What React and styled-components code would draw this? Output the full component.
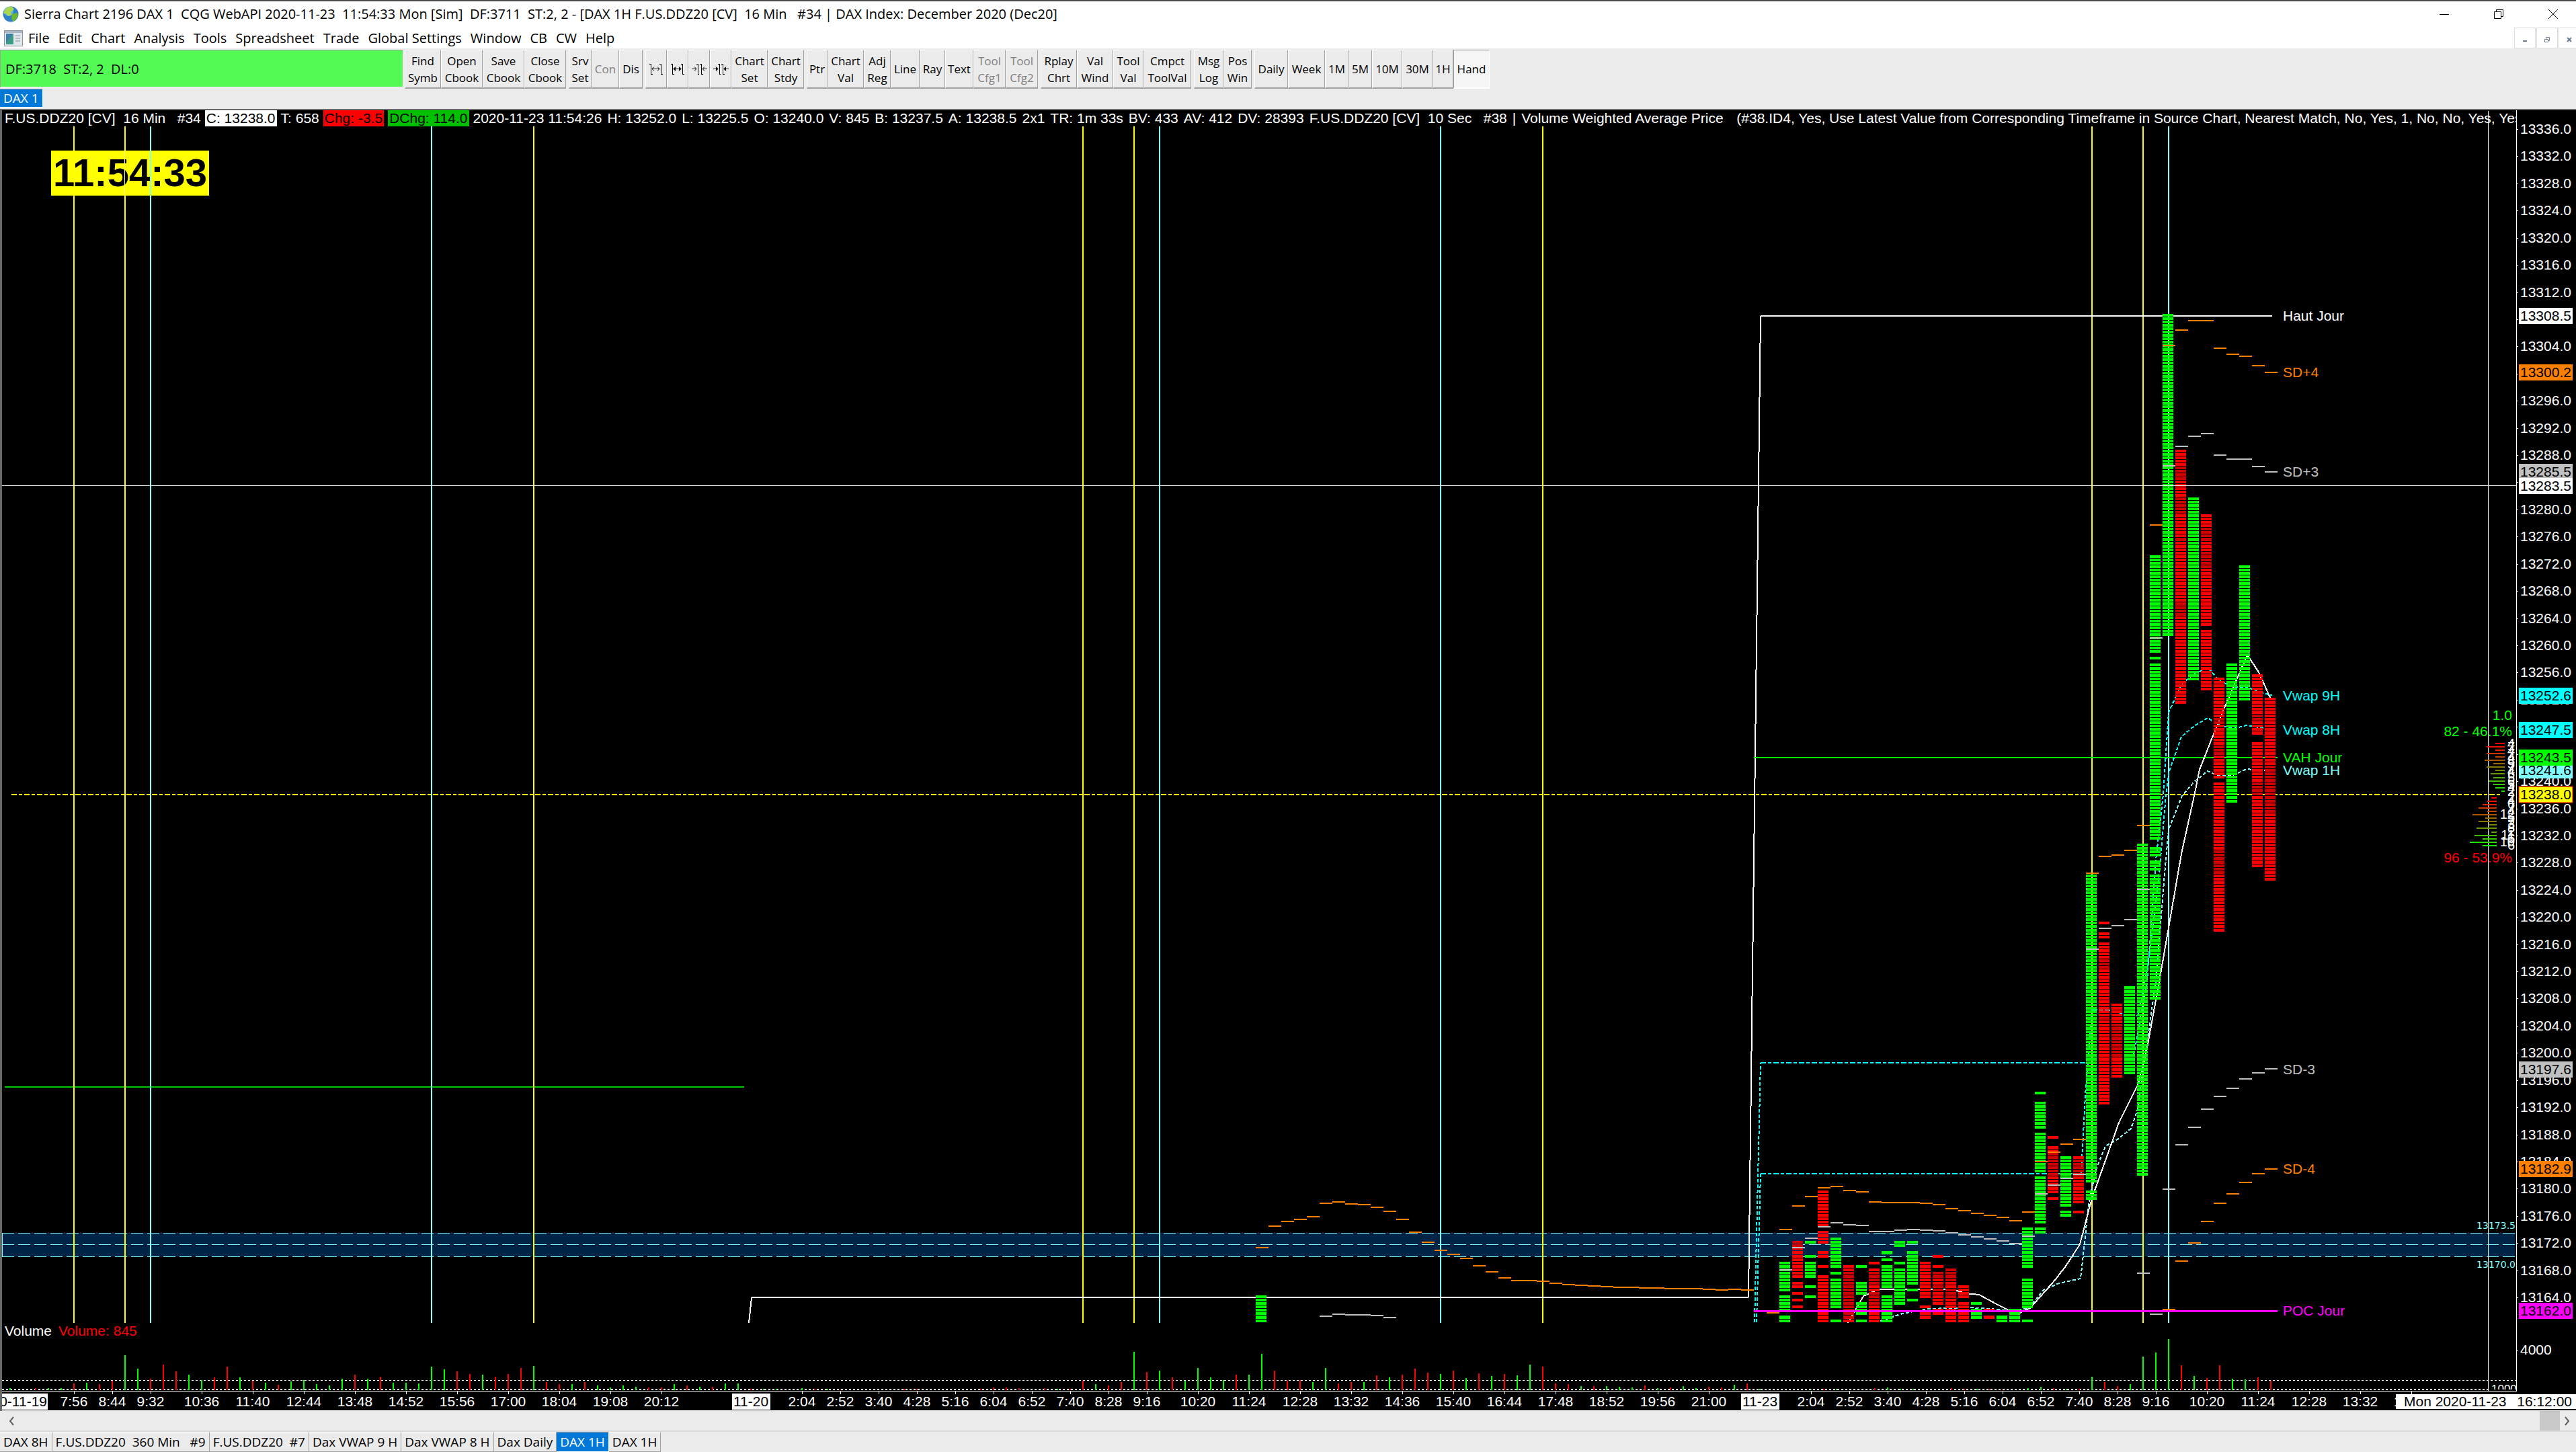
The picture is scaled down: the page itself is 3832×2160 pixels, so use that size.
import React from 'react'
import styled, { createGlobalStyle } from 'styled-components'

const GlobalStyle = createGlobalStyle`
	body {
		margin: 0;
		background: #ebebeb;
	}
	* {
		box-sizing: border-box;
	}
`

const uiFont = '"Open Sans", "Noto Sans", sans-serif'
const chartFont = '"Liberation Sans", Arial, sans-serif'

const Page = styled.div`
	display: flex;
	flex-direction: column;
	width: 100%;
	overflow: hidden;
	background: #ebebeb;
	border-top: 2px solid #4a4a4a;
	font-family: ${uiFont};
	font-size: 20px;
	color: #000;
`

const TitleBar = styled.header`
	display: flex;
	align-items: center;
	height: 39px;
	padding: 0 0 2px 4px;
	gap: 8px;
	background: #fff;
`

const TitleText = styled.h1`
	flex: 1;
	margin: 0;
	font-size: 20px;
	font-weight: 400;
	line-height: 26px;
	white-space: pre;
`

const WindowButtons = styled.div`
	display: flex;
	margin-right: -6px;
`

const WindowButton = styled.button`
	display: flex;
	align-items: center;
	justify-content: center;
	width: 81px;
	height: 34px;
	padding: 0;
	border: 0;
	background: none;
`

const MenuBar = styled.nav`
	display: flex;
	align-items: center;
	height: 31px;
	padding-left: 6px;
	background: #fff;
`

const MenuItems = styled.div`
	display: flex;
	flex: 1;
	gap: 13px;
	padding-left: 8px;
`

const MenuItem = styled.button`
	padding: 0;
	border: 0;
	background: none;
	font: inherit;
	line-height: 26px;
`

const MdiButton = styled.button`
	display: flex;
	align-items: center;
	justify-content: center;
	width: 32px;
	height: 31px;
	margin-left: 1px;
	padding: 4px 0 0;
	border: 1px solid #dcdcdc;
	background: #fff;
`

const ToolBar = styled.div`
	display: flex;
	height: 60px;
	padding-top: 2px;
	gap: 4px;
`

const Status = styled.div`
	display: flex;
	align-items: center;
	width: 600px;
	height: 56px;
	padding-left: 7px;
	margin-right: -2px;
	border: 1px solid #a0a0a0;
	border-right-color: #fff;
	border-bottom-color: #fff;
	background: #54fa54;
	white-space: pre;
`

const ToolGroup = styled.div`
	display: flex;
`

const ToolButton = styled.button`
	display: flex;
	align-items: center;
	justify-content: center;
	width: ${props => props.$width}px;
	height: 58px;
	padding: 0;
	border: solid;
	border-width: 1px 1px 2px;
	border-color: ${props => props.$pressed ? '#a0a0a0 #fff #fff #a0a0a0' : '#fff #a0a0a0 #a0a0a0 #fff'};
	background: ${props => props.$pressed ? '#f5f5f5' : '#ebebeb'};
	color: ${props => props.disabled ? '#808080' : '#000'};
	font: inherit;
	font-size: 17px;
	line-height: 25px;
	text-align: center;
	white-space: pre;
`

const TabRow = styled.div`
	display: flex;
	height: 30px;
`

const Tab = styled.button`
	height: ${props => props.$compact ? '28px' : '30px'};
	padding: 0 5px;
	border: solid;
	border-width: 1px 1px 1px 0;
	border-color: ${props => props.$active ? '#a0a0a0 #fff #fff' : '#fff #a0a0a0 #a0a0a0'};
	background: ${props => props.$active ? '#0078d7' : '#ebebeb'};
	color: ${props => props.$active ? '#fff' : '#000'};
	font: inherit;
	font-size: 19px;
	line-height: 26px;
	white-space: pre;
`

const ChartWindow = styled.main`
	position: relative;
	border-top: 2px solid #696969;
	border-left: 3px solid #696969;
	background: #000;
	svg {
		display: block;
		width: 100%;
		height: auto;
	}
`

const ChartHeader = styled.div`
	position: absolute;
	top: 0;
	left: 0;
	right: 89px;
	display: flex;
	gap: 6px;
	padding-left: 4px;
	overflow: hidden;
	color: #fff;
	font-family: ${chartFont};
	font-size: 21px;
	line-height: 24px;
	white-space: pre;
`

const HeaderTag = styled.span`
	padding: 0 2px;
	background: ${props => props.$bg};
	color: #000;
`

const HeaderValues = styled.div`
	display: flex;
	gap: 8px;
`

const Clock = styled.div`
	position: absolute;
	top: 60px;
	left: 73px;
	padding: 0 3px 2px;
	background: #ff0;
	color: #000;
	font: bold 58px/65px ${chartFont};
	/* session lines stay visible across the clock */
	&::before,
	&::after {
		content: '';
		position: absolute;
		top: 0;
		bottom: 0;
		left: 109px;
		width: 1px;
		background: #ffff80;
	}
	&::after {
		left: 147px;
		width: 2px;
		background: #80ffff;
	}
`

const ScrollBar = styled.div`
	display: flex;
	align-items: center;
	justify-content: space-between;
	height: 31px;
	border-bottom: 2px solid #d9d9d9;
`

const ScrollEnd = styled.div`
	display: flex;
`

const ScrollThumb = styled.div`
	width: 30px;
	height: 29px;
	background: #c8c8c8;
`

const ScrollButton = styled.button`
	width: 24px;
	height: 29px;
	margin-left: ${props => props.$left ? '6px' : '0'};
	padding: 0 7px;
	border: 0;
	background: none;
	svg {
		display: block;
	}
`

const menus = ['File', 'Edit', 'Chart', 'Analysis', 'Tools', 'Spreadsheet', 'Trade', 'Global Settings', 'Window', 'CB', 'CW', 'Help']

// label, width, state
const toolGroups = [
	[['Find\nSymb', 54], ['Open\nCbook', 62], ['Save\nCbook', 62], ['Close\nCbook', 62]],
	[['Srv\nSet', 34], ['Con', 41, 'off'], ['Dis', 35]],
	[['out', 32], ['outBold', 32], ['in', 32], ['inBold', 32], ['Chart\nSet', 54], ['Chart\nStdy', 54]],
	[['Ptr', 31], ['Chart\nVal', 54], ['Adj\nReg', 40], ['Line', 43], ['Ray', 38], ['Text', 42], ['Tool\nCfg1', 48, 'off'], ['Tool\nCfg2', 48, 'off']],
	[['Rplay\nChrt', 54], ['Val\nWind', 54], ['Tool\nVal', 45], ['Cmpct\nToolVal', 71]],
	[['Msg\nLog', 44], ['Pos\nWin', 42]],
	[['Daily', 50], ['Week', 55], ['1M', 35], ['5M', 35], ['10M', 45], ['30M', 45], ['1H', 31], ['Hand', 54, 'pressed']],
]

const chartTabs = ['DAX 8H', 'F.US.DDZ20  360 Min   #9', 'F.US.DDZ20  #7', 'Dax VWAP 9 H', 'Dax VWAP 8 H', 'Dax Daily', 'DAX 1H', 'DAX 1H']

const headerValues = [
	'2020-11-23 11:54:26', 'H: 13252.0', 'L: 13225.5', 'O: 13240.0', 'V: 845', 'B: 13237.5', 'A: 13238.5', '2x1',
	'TR: 1m 33s', 'BV: 433', 'AV: 412', 'DV: 28393', 'F.US.DDZ20 [CV]  10 Sec   #38', '|', 'Volume Weighted Average Price',
	'  (#38.ID4, Yes, Use Latest Value from Corresponding Timeframe in Source Chart, Nearest Match, No, Yes, 1, No, No, Yes, Yes',
]

const GREEN = '#00ff00'
const RED = '#ff0000'
const ORANGE = '#ff8000'
const GREY = '#c0c0c0'
const CYAN = '#00ffff'
const PALE = '#80ffff'
const YELLOW = '#ffff00'

const barX = i => 15 + i * 19
const priceY = p => 192 + (13336 - p) * 10.105

const sessionLines = [
	[5, YELLOW], [9, YELLOW], [11, PALE], [33, PALE], [41, YELLOW],
	[84, YELLOW], [88, YELLOW], [90, PALE], [112, PALE], [120, YELLOW],
	[163, YELLOW], [167, YELLOW], [169, PALE],
]

// bar index, colour, then top/bottom pairs of the traded ranges
const columns = [
	[98, GREEN, 1927, 1968],
	[139, GREEN, 1876, 1921, 1927, 1952, 1957, 1968],
	[140, RED, 1846, 1901, 1907, 1917, 1922, 1927, 1932, 1937, 1942, 1947],
	[141, GREEN, 1846, 1851, 1866, 1871, 1876, 1902, 1912, 1917, 1927, 1932],
	[142, RED, 1770, 1826, 1831, 1851, 1861, 1871, 1881, 1886, 1896, 1968],
	[143, GREEN, 1841, 1886, 1891, 1896, 1901, 1947, 1962, 1968],
	[144, RED, 1881, 1968],
	[145, GREEN, 1881, 1886, 1906, 1927, 1937, 1957, 1962, 1968],
	[146, RED, 1876, 1881, 1886, 1968],
	[147, GREEN, 1861, 1866, 1871, 1876, 1881, 1917, 1927, 1968],
	[148, GREEN, 1846, 1856, 1876, 1881, 1886, 1942],
	[149, GREEN, 1846, 1851, 1861, 1911, 1917, 1922, 1932, 1937],
	[150, RED, 1876, 1932, 1942, 1947, 1952, 1962],
	[151, RED, 1866, 1871, 1881, 1886, 1891, 1942, 1947, 1957],
	[152, RED, 1886, 1968],
	[153, RED, 1912, 1932, 1937, 1968],
	[154, GREEN, 1937, 1942, 1947, 1962, 1967, 1968],
	[155, RED, 1947, 1952, 1957, 1962, 1967, 1968],
	[156, GREEN, 1957, 1968],
	[157, GREEN, 1947, 1968],
	[158, GREEN, 1826, 1886, 1901, 1947, 1962, 1967],
	[159, GREEN, 1624, 1629, 1639, 1679, 1684, 1745, 1750, 1820, 1826, 1835],
	[160, RED, 1689, 1694, 1704, 1775, 1780, 1785],
	[161, GREEN, 1720, 1795, 1800, 1810],
	[162, RED, 1720, 1790, 1800, 1805],
	[163, GREEN, 1299, 1760, 1770, 1785],
	[164, RED, 1371, 1376, 1386, 1396, 1401, 1643],
	[165, RED, 1492, 1603],
	[166, GREEN, 1467, 1598],
	[167, GREEN, 1255, 1749],
	[168, GREEN, 826, 971, 977, 982, 987, 1249, 1260, 1275, 1280, 1295, 1300, 1486],
	[169, GREEN, 467, 946],
	[170, RED, 669, 1047],
	[171, GREEN, 740, 1011],
	[172, RED, 765, 932, 937, 1028],
	[173, RED, 1007, 1158, 1164, 1385],
	[174, GREEN, 987, 1193],
	[175, GREEN, 841, 1043],
	[176, RED, 1002, 1092, 1103, 1289],
	[177, RED, 1038, 1309],
]

const darkRows = [
	[140, 1846, 1857], [144, 1891, 1962], [146, 1892, 1912], [146, 1922, 1942], [151, 1891, 1902],
	[151, 1912, 1922], [152, 1886, 1907], [152, 1917, 1932], [160, 1715, 1750], [162, 1725, 1745],
	[164, 1426, 1442], [164, 1512, 1517], [165, 1521, 1572], [170, 694, 715], [170, 740, 765],
	[170, 800, 806], [170, 896, 916], [172, 785, 806], [172, 820, 842], [173, 1068, 1078],
	[173, 1108, 1120], [173, 1265, 1300], [176, 1063, 1072], [176, 1164, 1182], [177, 1138, 1210],
]

const steps = (start, ys) => ys.map((y, n) => [start + n, y])

const orangeSteps = [
	...steps(98, [1856, 1824, 1817, 1814, 1810, 1790, 1788, 1791, 1792, 1796, 1802, 1814, 1833, 1848, 1860, 1866, 1872, 1883, 1892, 1901, 1905, 1905, 1906, 1909, 1911, 1912, 1913, 1914, 1915, 1915, 1916, 1916, 1917, 1917, 1917, 1918, 1919, 1918, 1919]),
	...steps(138, [1953, 1829, 1794, 1780, 1767, 1765, 1771, 1773, 1788, 1789, 1789, 1789, 1790, 1792, 1798, 1801, 1805, 1808, 1811, 1816, 1803, 1728, 1714, 1702, 1695, 1299, 1274, 1272, 1265, 1228, 781, 514, 491, 477, 477, 518, 527, 530, 544, 554]),
	...steps(169, [1948, 1876, 1849, 1817, 1790, 1776, 1759, 1746, 1739]),
]

const greySteps = [
	...steps(103, [1958, 1955, 1956, 1956, 1957, 1960]),
	...steps(139, [1889, 1856, 1842, 1825, 1819, 1822, 1823, 1832, 1832, 1830, 1829, 1830, 1831, 1834, 1837, 1840, 1843, 1846, 1850, 1839, 1776, 1763, 1753, 1747, 1412, 1381, 1377, 1368, 1323, 949, 693, 664, 649, 645, 677, 683, 683, 694, 702]),
	...steps(167, [1894, 1955, 1769, 1703, 1677, 1650, 1631, 1619, 1605, 1596, 1590]),
]

// positive = up bar, negative = down bar, height in px
const volumes = [
	3, 0, -3, 3, 3, -10, 11, -9, -14, 52, 32, -17, -38, -28, 23, 15, -19, -35, 19, -14,
	11, -8, 13, 15, 9, 7, 17, -23, 17, -20, 11, 11, 10, 35, 31, -28, -24, 23, -20, -24,
	-33, 36, -12, -9, 9, -12, 7, 4, 7, 5, -4, -4, 9, -7, 5, -5, 10, 10, -2, 2,
	2, 0, 3, -2, 2, -1, 0, 0, 0, 0, -2, -2, 0, 0, 0, 0, -2, -4, -4, -3,
	0, -3, 2, -2, -14, 9, -7, -12, 57, -27, 29, -19, 14, 33, 19, 15, -23, 23, 54, -29,
	-14, -15, 12, 33, -10, -12, 12, -22, 19, -23, -32, -26, 24, -29, 18, -25, 21, -24, 22, 38,
	-35, -10, -9, 6, -6, 6, 5, 4, -7, 3, -4, 6, 3, -5, -4, 8, -10, 2, 0, 0,
	0, 1, -2, 2, 0, 0, -3, 4, 2, 2, 0, 0, -3, -2, 2, -2, -1, 0, 3, 5,
	-3, 2, -2, 20, -12, -6, 9, 50, 56, 76, -37, 21, -18, -37, 17, 16, -19, -14,
]

const times = [
	['7:56', 5], ['8:44', 8], ['9:32', 11], ['10:36', 15], ['11:40', 19], ['12:44', 23], ['13:48', 27], ['14:52', 31],
	['15:56', 35], ['17:00', 39], ['18:04', 43], ['19:08', 47], ['20:12', 51], ['2:04', 62], ['2:52', 65], ['3:40', 68],
	['4:28', 71], ['5:16', 74], ['6:04', 77], ['6:52', 80], ['7:40', 83], ['8:28', 86], ['9:16', 89], ['10:20', 93],
	['11:24', 97], ['12:28', 101], ['13:32', 105], ['14:36', 109], ['15:40', 113], ['16:44', 117], ['17:48', 121],
	['18:52', 125], ['19:56', 129], ['21:00', 133], ['2:04', 141], ['2:52', 144], ['3:40', 147], ['4:28', 150],
	['5:16', 153], ['6:04', 156], ['6:52', 159], ['7:40', 162], ['8:28', 165], ['9:16', 168], ['10:20', 172],
	['11:24', 176], ['12:28', 180], ['13:32', 184], ['14:36', 188],
]

const priceTags = [
	[13308.5, '#fff'], [13300.2, ORANGE], [13285.5, GREY], [13283.5, '#fff'], [13252.6, CYAN], [13247.5, CYAN],
	[13241.6, PALE], [13243.5, GREEN], [13238, YELLOW, RED], [13197.6, GREY], [13182.9, ORANGE], [13162, '#ff00ff'],
]

const studyLabels = [
	['Haut Jour', 13308.5, '#fff'], ['SD+4', 13300.2, ORANGE], ['SD+3', 13285.5, GREY], ['Vwap 9H', 13252.6, CYAN],
	['Vwap 8H', 13247.5, CYAN], ['VAH Jour', 13243.5, GREEN], ['Vwap 1H', 13241.6, PALE], ['SD-3', 13197.6, GREY],
	['SD-4', 13182.9, ORANGE], ['POC Jour', 13162, '#ff00ff'],
]

// resting orders: bar lengths around the last price
const asks = [14, 27, 14, 27, 14, 30, 17, 27, 14, 21, 17, 24, 17, 14, 5]
const bids = [8, 14, 21, 27, 14, 36, 17, 27, 11, 30, 8, 33, 21, 40, 21]

const heat = n => {
	const g = Math.round(n * 17)
	return `rgb(${255 - g}, ${g}, 0)`
}

const Globe = () => (
	<svg width="24" height="28" viewBox="0 0 24 28" aria-hidden="true">
		<circle cx="12" cy="14" r="11.5" fill="#2f80c8" />
		<circle cx="9" cy="10" r="7" fill="#8fd0f5" opacity="0.6" />
		<path d="M3 8 Q8 2 14 3 L17 7 L12 11 L13 15 L8 17 L5 13 L1 13 Z" fill="#a8d84a" />
		<path d="M14 14 L21 12 L23 15 Q21 22 16 25 L13 21 Z" fill="#6cb52d" />
	</svg>
)

const ChartIcon = () => (
	<svg width="28" height="24" viewBox="0 0 28 24" aria-hidden="true">
		<rect x="0.5" y="0.5" width="27" height="23" fill="#dfe6ec" stroke="#8b949c" />
		<rect x="1" y="1" width="26" height="3" fill="#a9b7c4" />
		<rect x="3" y="5" width="11" height="16" fill="#3d9a86" />
		<path d="M3 5 H14 L3 18 Z" fill="#3f7fae" />
		<path d="M17 8 H24 M17 12 H24 M17 16 H24" stroke="#8b949c" />
	</svg>
)

const SpacingIcon = ({ type }) => {
	const outward = type.startsWith('out')
	const bold = type.endsWith('Bold')
	const frame = outward ? 'M2 2 H5 M4 2 V18 M4 17 H7 M17 2 H20 M19 2 V18 M19 17 H22' : 'M8 2 H10 M10 2 V18 M10 17 H12 M13 2 H15 M15 2 V18 M15 17 H18'
	return (
		<svg width="24" height="20" viewBox="0 0 24 20" fill="none" stroke="#000" aria-hidden="true">
			<path d={frame} shapeRendering="crispEdges" />
			{outward && <path d="M6 9.5 H17" />}
			{outward && <path d="M9 6.5 L6 9.5 L9 12.5 M14 6.5 L17 9.5 L14 12.5" fill={bold ? '#000' : 'none'} />}
			{!outward && <path d="M1 9.5 H7 M18 9.5 H24" />}
			{!outward && <path d="M5 6.5 L8 9.5 L5 12.5 M20 6.5 L17 9.5 L20 12.5" fill={bold ? '#000' : 'none'} />}
		</svg>
	)
}

const toolNames = { out: 'Increase bar spacing', outBold: 'Widest bar spacing', in: 'Decrease bar spacing', inBold: 'Narrowest bar spacing' }

const Tool = ({ label, width, state }) => (
	<ToolButton $width={width} $pressed={state === 'pressed'} disabled={state === 'off'} aria-label={toolNames[label]}>
		{toolNames[label] ? <SpacingIcon type={label} /> : label}
	</ToolButton>
)

const FIRST_ROW = 467
const ROW = 5.0525

const rowY = r => Math.round(FIRST_ROW + r * ROW)

const Column = ({ data }) => {
	const [index, color, ...ranges] = data
	const x = barX(index) - 9
	const rows = []
	for (let n = 0; n < ranges.length; n += 2) {
		const from = Math.round((ranges[n] - FIRST_ROW) / ROW)
		const to = Math.max(from + 1, Math.round((ranges[n + 1] - FIRST_ROW) / ROW))
		for (let r = from; r < to; r++) {
			const y = rowY(r)
			const height = Math.min(rowY(r + 1) - y - 1, 1968 - y)
			const dark = color === RED && darkRows.some(([i, a, b]) => i === index && y >= a && y < b)
			rows.push(<rect key={r} x={x} y={y} width="16" height={height} fill={dark ? '#d00000' : color} />)
		}
	}
	return <g>{rows}</g>
}

const Steps = ({ points, color }) => (
	<path d={points.map(([i, y]) => `M${barX(i) - 9} ${y} h19`).join(' ')} stroke={color} strokeWidth="2" />
)

const PriceAxis = () => {
	const prices = Array.from({ length: 44 }, (_, n) => 13336 - n * 4)
	return (
		<g>
			{prices.map(p => (
				<g key={p}>
					<rect x="3744" y={Math.round(priceY(p))} width="2" height="1" fill="#fff" />
					<text x="3749" y={Math.round(priceY(p)) + 7} fill="#fff">{p.toFixed(1)}</text>
				</g>
			))}
			{priceTags.map(([p, bg, border]) => (
				<g key={p}>
					<rect x="3747" y={Math.round(priceY(p)) - 12} width="80" height="24" fill={bg} stroke={border || 'none'} />
					<text x="3749" y={Math.round(priceY(p)) + 7} fill="#000">{p.toFixed(1)}</text>
				</g>
			))}
			<rect x="3744" y="2008" width="2" height="1" fill="#fff" />
			<text x="3749" y="2015" fill="#fff">4000</text>
		</g>
	)
}

const TimeAxis = () => (
	<g>
		<rect x="3" y="2069" width="3741" height="1" fill="#fff" />
		<rect x="3743" y="164" width="1" height="1906" fill="#fff" />
		<g fill="#fff" textAnchor="middle">
			{times.map(([label, i]) => (
				<g key={i}>
					<rect x={barX(i)} y="2070" width="1" height="4" />
					<text x={barX(i)} y="2092">{label}</text>
				</g>
			))}
		</g>
		<rect x="3" y="2073" width="68" height="24" fill="#fff" />
		<text x="70" y="2092" textAnchor="end">2020-11-19</text>
		<rect x="1089" y="2073" width="57" height="24" fill="#fff" />
		<text x="1117" y="2092" textAnchor="middle">11-20</text>
		<rect x="2590" y="2073" width="57" height="24" fill="#fff" />
		<text x="2618" y="2092" textAnchor="middle">11-23</text>
		<rect x="3564" y="2074" width="268" height="22" fill="#fff" />
		<text x="3576" y="2092">Mon 2020-11-23</text>
		<text x="3826" y="2092" textAnchor="end">16:12:00</text>
		<rect x="3" y="2098" width="3829" height="1" fill="#fff" />
	</g>
)

const OrderBook = () => (
	<g>
		{asks.map((w, n) => <rect key={n} x={3726 - w} y={1105 + Math.round(n * ROW)} width={w} height="2" fill={heat(n)} />)}
		{bids.map((w, n) => <rect key={n} x={3714 - w} y={1186 + Math.round(n * ROW)} width={w} height="2" fill={heat(n)} />)}
		<g fill="#fff" fontSize="20" textAnchor="end">
			{asks.map((w, n) => <text key={n} x="3741" y={1113 + Math.round(n * ROW)}>{Math.min(9, Math.ceil(w / 4))}</text>)}
			{bids.map((w, n) => <text key={n} x="3741" y={1193 + Math.round(n * ROW)}>{w > 32 ? (w > 38 ? 10 : w === 36 ? 12 : 11) : Math.ceil(w / 4)}</text>)}
		</g>
		<text x="3737" y="1071" fill={GREEN} textAnchor="end">1.0</text>
		<text x="3737" y="1095" fill={GREEN} textAnchor="end">82 - 46.1%</text>
		<text x="3737" y="1283" fill={RED} textAnchor="end">96 - 53.9%</text>
	</g>
)

const PriceChart = () => (
	<svg viewBox="3 164 3829 1935" fontFamily={chartFont} fontSize="21" role="img" aria-label="DAX price chart">
		<g shapeRendering="crispEdges" fill="none">
			<rect x="3" y="1834" width="3739" height="35" fill="#002448" />
			<path d="M3 1834.5 H3742 M3 1851.5 H3742 M3 1869.5 H3742" stroke={PALE} strokeDasharray="18 6" />
			<path d="M3.5 1834 V1869" stroke={PALE} />
			<path d="M7 1617 H1107" stroke="#00c800" strokeWidth="2" />
			{sessionLines.map(([i, color]) => <rect key={i} x={barX(i) - 1} y="188" width="2" height="1780" fill={color} />)}
			<path d="M1118 1930 H2601 M2619 470 H3380" stroke="#fff" strokeWidth="2" />
			<path d="M1114 1968 L1118 1930 M2601 1930 L2619 470" stroke="#fff" strokeWidth="2" />
			<path d="M2609 1127 H3388" stroke={GREEN} strokeWidth="2" />
			<path d="M17 1182 H3722" stroke={YELLOW} strokeWidth="2" strokeDasharray="8 3 5 3" />
			<path d="M2619 1581 H3102 M2619 1746 H3096 M3112 1502 L3150 1504 L3160 1511 H3180" stroke={CYAN} strokeWidth="2" strokeDasharray="8 3 5 3" />
			<path d="M2610 1967 L2619 1581 M2613 1967 L2619 1746 M3096 1746 L3102 1630 L3112 1502 M3174 1570 L3194 1460 L3207 1280 L3218 1182 L3226 1060 L3245 1018 L3264 1002 L3286 994 L3300 1012 L3322 1022 L3343 1022 L3360 1030 L3380 1034" stroke={CYAN} strokeWidth="2" strokeDasharray="5 3" />
			<path d="M3180 1511 L3196 1430 L3212 1300 L3222 1182 L3226 1150 L3245 1096 L3264 1080 L3284 1068 L3300 1078 L3322 1084 L3342 1079 L3360 1082 L3380 1086" stroke={CYAN} strokeWidth="2" strokeDasharray="5 3" />
			<path d="M2797 1965 L2830 1954 L2870 1947 L2930 1945 L2960 1947 L2995 1950 L3018 1946 L3040 1919 L3063 1909 L3095 1902 L3101 1849 L3107 1790 L3118 1740 L3132 1705 L3150 1695 L3170 1679 L3180 1650 L3188 1590 L3197 1530 L3207 1460 L3220 1300 L3226 1234 L3246 1184 L3264 1163 L3284 1147 L3300 1154 L3322 1153 L3342 1144 L3360 1146 L3380 1146" stroke={PALE} strokeWidth="2" strokeDasharray="5 3" />
			<path d="M2749 1968 L2772 1928 L2795 1918 L2905 1918 L2923 1924 L2944 1926 L2970 1940 L3000 1955 L3020 1946 L3058 1903 L3074 1882 L3094 1851 L3112 1782 L3135 1718 L3152 1670 L3180 1614 L3192 1570 L3212 1460 L3226 1380 L3245 1270 L3264 1184 L3272 1145 L3300 1074 L3343 974 L3360 1000 L3378 1040" stroke="#fff" strokeWidth="2" />
			{columns.map(c => <Column key={c[0]} data={c} />)}
			<Steps points={orangeSteps} color={ORANGE} />
			<Steps points={greySteps} color={GREY} />
			<path d="M2609 1950.5 H3388" stroke="#ff00ff" strokeWidth="3" />
			<path d="M3 722.5 H3743" stroke="#fff" />
			<path d="M3 2053.5 H3743" stroke="#fff" strokeDasharray="3 3" />
			<path d="M3 2067 H3701" stroke="#fff" strokeWidth="2" strokeDasharray="3 3" />
			{volumes.map((v, i) => v !== 0 && (
				<rect key={i} x={barX(i) - 1} y={2068 - Math.abs(v)} width="2" height={Math.abs(v)} fill={v > 0 ? GREEN : RED} />
			))}
			<path d="M3701.5 165 V2069" stroke="#fff" />
		</g>
		{studyLabels.map(([label, p, color]) => <text key={label} x="3396" y={Math.round(priceY(p)) + 7} fill={color}>{label}</text>)}
		<g fontFamily='"DejaVu Sans", sans-serif' fontSize="14" fill={PALE} textAnchor="end">
			<text x="3742" y="1828">13173.5</text>
			<text x="3742" y="1886">13170.0</text>
		</g>
		<text x="7" y="1987" fill="#fff">Volume</text>
		<text x="87" y="1987" fill={RED}>Volume: 845</text>
		<clipPath id="volumePane"><rect x="3" y="1968" width="3741" height="99" /></clipPath>
		<text x="3706" y="2072" fontSize="17" fill="#fff" clipPath="url(#volumePane)">1000</text>
		<OrderBook />
		<PriceAxis />
		<TimeAxis />
	</svg>
)

const App = () => (
	<Page>
		<GlobalStyle />
		<TitleBar>
			<Globe />
			<TitleText>{'Sierra Chart 2196 DAX 1  CQG WebAPI 2020-11-23  11:54:33 Mon [Sim]  DF:3711  ST:2, 2 - [DAX 1H F.US.DDZ20 [CV]  16 Min   #34 | DAX Index: December 2020 (Dec20]'}</TitleText>
			<WindowButtons>
				<WindowButton aria-label="Minimize">
					<svg width="16" height="16" stroke="#000"><path d="M1 8.5 H15" /></svg>
				</WindowButton>
				<WindowButton aria-label="Restore">
					<svg width="16" height="16" fill="none" stroke="#000"><path d="M1.5 4.5 H11.5 V14.5 H1.5 Z M4.5 4 V1.5 H14.5 V11.5 H12" /></svg>
				</WindowButton>
				<WindowButton aria-label="Close">
					<svg width="16" height="16" stroke="#000"><path d="M1 1 L15 15 M15 1 L1 15" /></svg>
				</WindowButton>
			</WindowButtons>
		</TitleBar>
		<MenuBar>
			<ChartIcon />
			<MenuItems>
				{menus.map(m => <MenuItem key={m}>{m}</MenuItem>)}
			</MenuItems>
			<WindowButtons>
				<MdiButton aria-label="Minimize chart">
					<svg width="10" height="10"><path d="M2 7 H8" stroke="#6b7d92" strokeWidth="2" /></svg>
				</MdiButton>
				<MdiButton aria-label="Restore chart">
					<svg width="10" height="10" fill="none" stroke="#6b7d92"><path d="M1.5 4.5 H6.5 V8.5 H1.5 Z M3.5 4 V1.5 H8.5 V6.5 H7" /></svg>
				</MdiButton>
				<MdiButton aria-label="Close chart">
					<svg width="10" height="10" stroke="#6b7d92" strokeWidth="2"><path d="M2 2 L8 8 M8 2 L2 8" /></svg>
				</MdiButton>
			</WindowButtons>
		</MenuBar>
		<ToolBar>
			<Status>{'DF:3718  ST:2, 2  DL:0'}</Status>
			{toolGroups.map((group, n) => (
				<ToolGroup key={n}>
					{group.map(([label, width, state]) => <Tool key={label} label={label} width={width} state={state} />)}
				</ToolGroup>
			))}
		</ToolBar>
		<TabRow>
			<Tab $active $compact>DAX 1</Tab>
		</TabRow>
		<ChartWindow>
			<PriceChart />
			<ChartHeader>
				<span>{'F.US.DDZ20 [CV]  16 Min   #34'}</span>
				<HeaderTag $bg="#fff">C: 13238.0</HeaderTag>
				<span>T: 658</span>
				<HeaderTag $bg="#f00">Chg: -3.5</HeaderTag>
				<HeaderTag $bg="#00c000">DChg: 114.0</HeaderTag>
				<HeaderValues>
					{headerValues.map(v => <span key={v}>{v}</span>)}
				</HeaderValues>
			</ChartHeader>
			<Clock>11:54:33</Clock>
		</ChartWindow>
		<ScrollBar>
			<ScrollButton $left aria-label="Scroll left">
				<svg width="8" height="14" fill="none" stroke="#606060" strokeWidth="2"><path d="M7 1 L2 7 L7 13" /></svg>
			</ScrollButton>
			<ScrollEnd>
				<ScrollThumb />
				<ScrollButton aria-label="Scroll right">
					<svg width="8" height="14" fill="none" stroke="#606060" strokeWidth="2"><path d="M1 1 L6 7 L1 13" /></svg>
				</ScrollButton>
			</ScrollEnd>
		</ScrollBar>
		<TabRow>
			{chartTabs.map((t, n) => <Tab key={n} $active={n === 6}>{t}</Tab>)}
		</TabRow>
	</Page>
)

export default App
